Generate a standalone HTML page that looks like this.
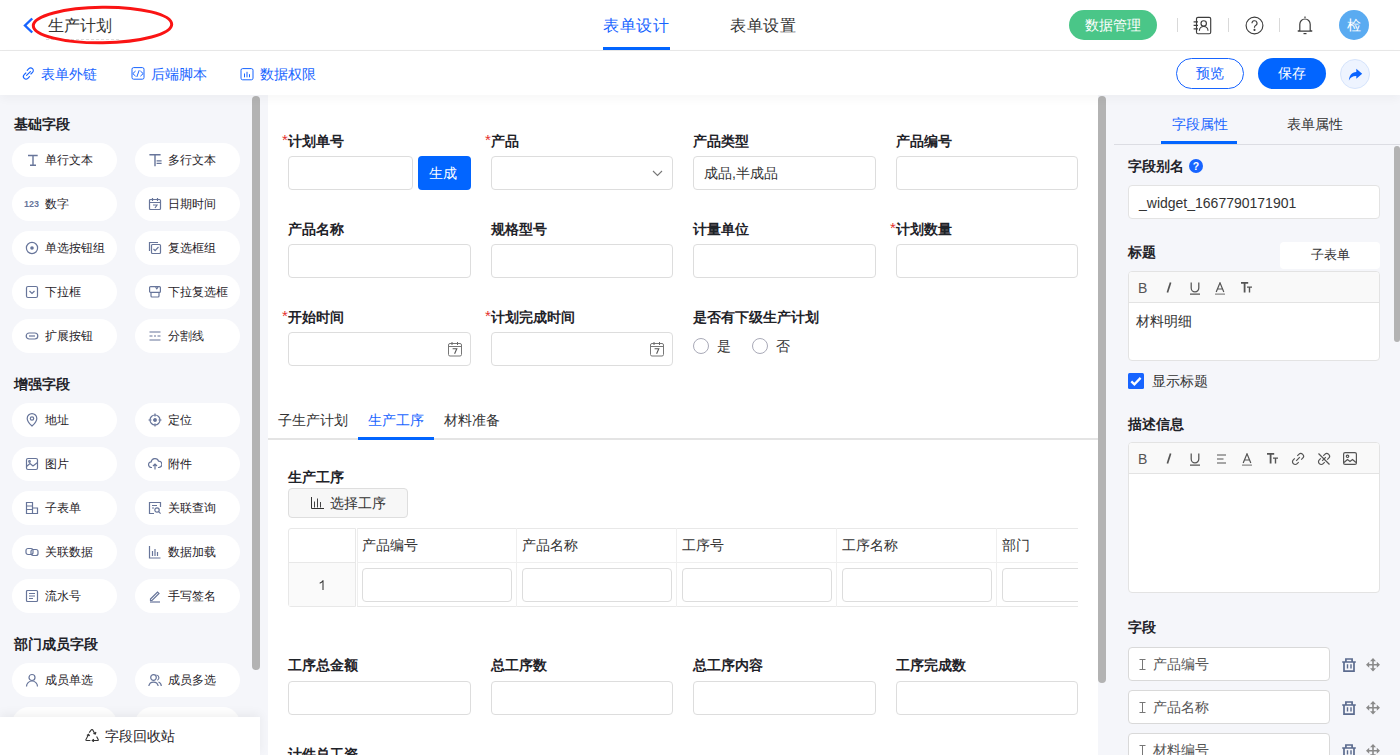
<!DOCTYPE html>
<html><head><meta charset="utf-8">
<style>
*{box-sizing:border-box;margin:0;padding:0}
html,body{width:1400px;height:755px;overflow:hidden;background:#f5f6fa;font-family:"Liberation Sans",sans-serif;color:#1f2329}
.abs{position:absolute}
#hdr{position:absolute;left:0;top:0;width:1400px;height:51px;background:#fff;border-bottom:1px solid #e8e8e8}
#tb{position:absolute;left:0;top:51px;width:1400px;height:44px;background:#fff;box-shadow:0 4px 9px rgba(0,0,0,0.035);z-index:2}
#left{position:absolute;left:0;top:95px;width:268px;height:660px;background:#f5f6fa}
#canvas{position:absolute;left:268px;top:95px;width:830px;height:660px;background:#fff;overflow:hidden}
#right{position:absolute;left:1106px;top:95px;width:294px;height:660px;background:#f5f6fa}
.sb{position:absolute;width:8px;border-radius:4px;background:#b3b3b3}
.sec{position:absolute;left:14px;font-size:14px;font-weight:bold;line-height:14px;color:#1f2329}
.pill{position:absolute;width:105px;height:34px;border-radius:17px;background:#fff;font-size:12px;line-height:34px;color:#1f2329;white-space:nowrap}
.pill svg{position:absolute;left:13px;top:10px}
.pill span{position:absolute;left:33px;top:0}
.lbl{position:absolute;font-size:14px;font-weight:bold;line-height:14px;color:#1f2329;white-space:nowrap}
.lbl i{font-style:normal;color:#e5302d;position:absolute;left:-6px;top:-1px;font-weight:normal;font-size:15px}
.inp{position:absolute;height:34px;border:1px solid #dddddd;border-radius:4px;background:#fff}
</style></head><body>
<div id="hdr">
  <svg class="abs" style="left:22px;top:17px" width="12" height="17" viewBox="0 0 12 17"><path d="M10.2 1.5 L3 8.5 L10.2 15.5" fill="none" stroke="#1764ff" stroke-width="2.4"/></svg>
  <div class="abs" style="left:48px;top:17px;font-size:16px;line-height:18px;color:#333">生产计划</div>
  <div class="abs" style="left:46px;top:39px;width:73px;border-top:1px dashed #dcdcdc"></div>
  <svg class="abs" style="left:31px;top:4px" width="145" height="42" viewBox="0 0 145 42"><ellipse cx="71.5" cy="21" rx="69.2" ry="17.8" fill="none" stroke="#fa1414" stroke-width="3" transform="rotate(-0.6 71.5 21)"/></svg>
  <div class="abs" style="left:603px;top:17px;letter-spacing:0.6px;font-size:16px;line-height:18px;color:#1764ff">表单设计</div>
  <div class="abs" style="left:603px;top:47px;width:67px;height:3px;background:#0265ff"></div>
  <div class="abs" style="left:730px;top:17px;letter-spacing:0.6px;font-size:16px;line-height:18px;color:#333">表单设置</div>
  <div class="abs" style="left:1069px;top:10px;width:88px;height:30px;border-radius:15px;background:#4ac688;color:#fff;font-size:14px;line-height:30px;text-align:center">数据管理</div>
  <div class="abs" style="left:1177px;top:18px;width:1px;height:14px;background:#d9d9d9"></div>
  <div class="abs" style="left:1228px;top:18px;width:1px;height:14px;background:#d9d9d9"></div>
  <div class="abs" style="left:1279px;top:18px;width:1px;height:14px;background:#d9d9d9"></div>

  <svg class="abs" style="left:1193px;top:16px" width="19" height="19" viewBox="0 0 19 19" fill="none" stroke="#3d3d3d" stroke-width="1.15"><rect x="3.5" y="1.3" width="14.2" height="16.4" rx="1.5"/><path d="M0.6 5.8h4.4M0.6 9.3h4.4M0.6 12.8h4.4"/><circle cx="10.7" cy="7.4" r="2.7"/><path d="M6.4 14.8a4.3 4.3 0 0 1 8.6 0"/></svg>
  <svg class="abs" style="left:1245px;top:16px" width="19" height="19" viewBox="0 0 19 19" fill="none" stroke="#3d3d3d" stroke-width="1.15"><circle cx="9.5" cy="9.5" r="8.4"/><path d="M7 7.3a2.5 2.5 0 1 1 3.6 2.2c-.8.4-1.1.9-1.1 1.7v.6"/><circle cx="9.5" cy="13.9" r="0.5" fill="#3a3a3a"/></svg>
  <svg class="abs" style="left:1297px;top:16px" width="16" height="19" viewBox="0 0 16 19" fill="none" stroke="#3d3d3d" stroke-width="1.2"><path d="M8 0.5v1.5"/><path d="M2.8 14.8V8.2a5.2 5.2 0 0 1 10.4 0v6.6H14.8v0.3H1.2v-0.3z" stroke-linejoin="round"/><path d="M6.5 17.6h3"/></svg>
  <div class="abs" style="left:1339px;top:10px;width:30px;height:30px;border-radius:15px;background:#5aabf1;color:#fff;font-size:14px;line-height:30px;text-align:center">检</div>
</div>
<div id="tb">

  <svg class="abs" style="left:22px;top:16px" width="13" height="13" viewBox="0 0 13 13" fill="none" stroke="#1764ff" stroke-width="1.15" stroke-linecap="round"><path d="M5.2 3.3l1.6-1.6a2.6 2.6 0 0 1 3.7 3.7L8.9 7"/><path d="M7.5 9.7L5.9 11.3a2.6 2.6 0 0 1-3.7-3.7L3.8 6"/><path d="M4.6 8.4l3.8-3.8"/></svg>
  <svg class="abs" style="left:131px;top:16px" width="14" height="13" viewBox="0 0 14 13" fill="none" stroke="#1764ff" stroke-width="1"><rect x="1" y="0.6" width="12" height="11.6" rx="1.6"/><path d="M4.6 4L1.8 6.6l2.8 2.6M9.4 4l2.8 2.6-2.8 2.6M8.2 3.2L5.8 10"/></svg>
  <svg class="abs" style="left:240px;top:17px" width="14" height="13" viewBox="0 0 14 13" fill="none" stroke="#1764ff" stroke-width="1"><rect x="1" y="0.6" width="12" height="11.2" rx="1.6"/><path d="M4.5 5.5v3.8M7 3.8v5.5M9.5 6.2v3.1"/></svg>
  <div class="abs" style="left:41px;top:16px;font-size:14px;line-height:14px;color:#1764ff">表单外链</div>
  <div class="abs" style="left:151px;top:16px;font-size:14px;line-height:14px;color:#1764ff">后端脚本</div>
  <div class="abs" style="left:260px;top:16px;font-size:14px;line-height:14px;color:#1764ff">数据权限</div>
  <div class="abs" style="left:1176px;top:7px;width:68px;height:31px;border-radius:16px;border:1px solid #1764ff;color:#1764ff;font-size:14px;line-height:29px;text-align:center">预览</div>
  <div class="abs" style="left:1258px;top:7px;width:68px;height:31px;border-radius:16px;background:#0265ff;color:#fff;font-size:14px;line-height:31px;text-align:center">保存</div>
  <div class="abs" style="left:1340px;top:8px;width:30px;height:30px;border-radius:15px;background:#eef4ff;border:1px solid #d6e4fc"><svg class="abs" style="left:7px;top:8px" width="15" height="13" viewBox="0 0 15 13"><path d="M8.3 0.8L14.2 5.8 8.3 10.8V7.9C4.6 7.8 2.2 9.3 0.9 12.4 1.2 7.4 3.6 4.4 8.3 3.9z" fill="#0a64ff"/></svg></div>
</div>
<div id="left">
<div class="sec" style="top:22px">基础字段</div>
<div class="sec" style="top:282px">增强字段</div>
<div class="sec" style="top:542px">部门成员字段</div>
<div class="pill" style="left:12px;top:48px"><svg width="14" height="14" viewBox="0 0 14 14" fill="none" stroke="#67759a" stroke-width="1.2"><path d="M3 2.5h9.7M8 2.5v9.8M5 12.3h6" stroke-width="1.4"/></svg><span>单行文本</span></div>
<div class="pill" style="left:135px;top:48px"><svg width="14" height="14" viewBox="0 0 14 14" fill="none" stroke="#67759a" stroke-width="1.2"><path d="M1.4 1.7h11.2M7 1.7v11.6" stroke-width="1.4"/><path d="M8.6 7.9h5M8.6 10.4h5" stroke-width="1.2"/></svg><span>多行文本</span></div>
<div class="pill" style="left:12px;top:92px"><svg width="16" height="14" viewBox="0 0 16 14" style="left:12px"><text x="0" y="10.2" font-family="Liberation Sans" font-weight="bold" font-size="9.6" textLength="15" lengthAdjust="spacingAndGlyphs" fill="#67759a">123</text></svg><span>数字</span></div>
<div class="pill" style="left:135px;top:92px"><svg width="14" height="14" viewBox="0 0 14 14" fill="none" stroke="#67759a" stroke-width="1.2"><rect x="1.5" y="2.5" width="11" height="10" rx="1"/><path d="M1.5 5.5h11M4.5 1v3M9.5 1v3M5 8h4l-2 3"/></svg><span>日期时间</span></div>
<div class="pill" style="left:12px;top:136px"><svg width="14" height="14" viewBox="0 0 14 14" fill="none" stroke="#67759a" stroke-width="1.2"><circle cx="7" cy="7" r="5.6"/><circle cx="7" cy="7" r="1.8" fill="#67759a" stroke="none"/></svg><span>单选按钮组</span></div>
<div class="pill" style="left:135px;top:136px"><svg width="14" height="14" viewBox="0 0 14 14" fill="none" stroke="#67759a" stroke-width="1.2"><path d="M1.5 10V1.5H10"/><rect x="3.5" y="3.5" width="9" height="9" rx="1"/><path d="M5.5 8l1.6 1.6L10.5 6"/></svg><span>复选框组</span></div>
<div class="pill" style="left:12px;top:180px"><svg width="14" height="14" viewBox="0 0 14 14" fill="none" stroke="#67759a" stroke-width="1.2"><rect x="1.5" y="1.5" width="11" height="11" rx="1.5"/><path d="M4.5 6l2.5 2.5L9.5 6"/></svg><span>下拉框</span></div>
<div class="pill" style="left:135px;top:180px"><svg width="14" height="14" viewBox="0 0 14 14" fill="none" stroke="#67759a" stroke-width="1.2"><rect x="1.6" y="1.6" width="10.8" height="5.8" rx="1"/><path d="M3 7.5v3.5a1 1 0 0 0 1 1h6a1 1 0 0 0 1-1V7.5"/><path d="M7.6 2.2l1.2 1.6 1.2-1.6"/></svg><span>下拉复选框</span></div>
<div class="pill" style="left:12px;top:224px"><svg width="14" height="14" viewBox="0 0 14 14" fill="none" stroke="#67759a" stroke-width="1.2"><rect x="1.2" y="4" width="11.6" height="6" rx="3"/><path d="M4 7h6"/></svg><span>扩展按钮</span></div>
<div class="pill" style="left:135px;top:224px"><svg width="14" height="14" viewBox="0 0 14 14" fill="none" stroke="#67759a" stroke-width="1.2"><path d="M1.5 3h11M1.5 7h3M6 7h2M9.5 7h3M1.5 11h11"/></svg><span>分割线</span></div>
<div class="pill" style="left:12px;top:308px"><svg width="14" height="14" viewBox="0 0 14 14" fill="none" stroke="#67759a" stroke-width="1.2"><path d="M7 13s-4.8-4.3-4.8-7.6A4.8 4.8 0 0 1 11.8 5.4C11.8 8.7 7 13 7 13z"/><circle cx="7" cy="5.5" r="1.7"/></svg><span>地址</span></div>
<div class="pill" style="left:135px;top:308px"><svg width="14" height="14" viewBox="0 0 14 14" fill="none" stroke="#67759a" stroke-width="1.2"><circle cx="7" cy="7" r="5"/><circle cx="7" cy="7" r="1.3" fill="#67759a"/><path d="M7 0.5v3M7 10.5v3M0.5 7h3M10.5 7h3"/></svg><span>定位</span></div>
<div class="pill" style="left:12px;top:352px"><svg width="14" height="14" viewBox="0 0 14 14" fill="none" stroke="#67759a" stroke-width="1.2"><rect x="1.5" y="1.5" width="11" height="11" rx="1.5"/><path d="M1.5 9.5l3.5-3 3 2.5 4.5-3.5"/><circle cx="4.5" cy="4.5" r="0.8"/></svg><span>图片</span></div>
<div class="pill" style="left:135px;top:352px"><svg width="14" height="14" viewBox="0 0 14 14" fill="none" stroke="#67759a" stroke-width="1.2"><path d="M4 10.5H3.5a2.8 2.8 0 0 1-.3-5.6A3.8 3.8 0 0 1 10.6 4.2a3 3 0 0 1 .2 6.3H10"/><path d="M7 12.5V7M5 9l2-2 2 2"/></svg><span>附件</span></div>
<div class="pill" style="left:12px;top:396px"><svg width="14" height="14" viewBox="0 0 14 14" fill="none" stroke="#67759a" stroke-width="1.2"><path d="M1.5 1.5h6v11h-6zM1.5 5h6M1.5 8.5h6M7.5 7h5v5.5h-5"/></svg><span>子表单</span></div>
<div class="pill" style="left:135px;top:396px"><svg width="14" height="14" viewBox="0 0 14 14" fill="none" stroke="#67759a" stroke-width="1.2"><path d="M12.5 6V1.5h-11v11H6"/><path d="M4 4.5h5M4 7h2"/><circle cx="9" cy="9" r="2.2"/><path d="M10.6 10.6l2 2"/></svg><span>关联查询</span></div>
<div class="pill" style="left:12px;top:440px"><svg width="14" height="14" viewBox="0 0 14 14" fill="none" stroke="#67759a" stroke-width="1.2"><rect x="1" y="3.5" width="7" height="6" rx="2"/><rect x="6" y="4.5" width="7" height="6" rx="2"/></svg><span>关联数据</span></div>
<div class="pill" style="left:135px;top:440px"><svg width="14" height="14" viewBox="0 0 14 14" fill="none" stroke="#67759a" stroke-width="1.2"><path d="M1.5 1v12h11M4.5 6v5M7 4v7M9.5 7v4"/></svg><span>数据加载</span></div>
<div class="pill" style="left:12px;top:484px"><svg width="14" height="14" viewBox="0 0 14 14" fill="none" stroke="#67759a" stroke-width="1.2"><rect x="1.5" y="1.5" width="11" height="11" rx="1"/><path d="M4 4.5h6M4 7h6M4 9.5h4"/></svg><span>流水号</span></div>
<div class="pill" style="left:135px;top:484px"><svg width="14" height="14" viewBox="0 0 14 14" fill="none" stroke="#67759a" stroke-width="1.2"><path d="M2.5 10l7-7 1.5 1.5-7 7H2.5z"/><path d="M2 13h10"/></svg><span>手写签名</span></div>
<div class="pill" style="left:12px;top:568px"><svg width="14" height="14" viewBox="0 0 14 14" fill="none" stroke="#67759a" stroke-width="1.2"><circle cx="7" cy="4.5" r="3"/><path d="M1.5 13.5a5.5 5.5 0 0 1 11 0"/></svg><span>成员单选</span></div>
<div class="pill" style="left:135px;top:568px"><svg width="14" height="14" viewBox="0 0 14 14" fill="none" stroke="#67759a" stroke-width="1.2"><circle cx="5.5" cy="4.5" r="2.8"/><path d="M0.8 13a4.8 4.8 0 0 1 9.4 0M8.5 2a2.8 2.8 0 0 1 .8 5.3M10.5 9a4.5 4.5 0 0 1 2.8 4"/></svg><span>成员多选</span></div>
<div class="pill" style="left:12px;top:612px"><span></span></div>
<div class="pill" style="left:135px;top:612px"><span></span></div>
<div class="abs" style="left:0;top:622px;width:260px;height:38px;background:#fff;box-shadow:0 -3px 10px rgba(0,0,0,0.06)"><svg class="abs" style="left:85px;top:12px" width="15" height="13" viewBox="0 0 15 13" fill="none" stroke="#333" stroke-width="1.1"><path d="M4.2 3.6L6.3 0.9Q7 0.1 7.7 0.9L9.6 4.2"/><path d="M8.4 4.4L10.3 4.9 10.9 3" stroke-width="1.2"/><path d="M3.6 5.6L0.9 10.6Q0.6 11.5 1.6 11.5H5.4"/><path d="M1.9 6.4L3.6 5.4 4.6 7" stroke-width="1.2"/><path d="M7.4 11.5H12.6Q13.6 11.5 13.2 10.5L11.6 7.4"/><path d="M8.8 10.1L7.3 11.5 8.8 12.8" stroke-width="1.2"/></svg><div class="abs" style="left:105px;top:12px;font-size:14px;line-height:14px;color:#1f2329">字段回收站</div></div>
  <div class="sb" style="left:252px;top:1px;height:574px"></div>
</div>
<div id="canvas">
<div class="lbl" style="left:20px;top:39px"><i>*</i>计划单号</div>
<div class="inp" style="left:20px;top:61px;width:125px"></div>
<div class="abs" style="left:150px;top:61px;width:53px;height:34px;border-radius:4px;background:#0265ff;color:#fff;font-size:14px;line-height:34px;text-align:center;padding-right:3px">生成</div>
<div class="lbl" style="left:223px;top:39px"><i>*</i>产品</div>
<div class="inp" style="left:223px;top:61px;width:182px"><svg class="abs" style="right:9px;top:13px" width="11" height="7" viewBox="0 0 11 7"><path d="M1 1l4.5 4.5L10 1" fill="none" stroke="#777" stroke-width="1.1"/></svg></div>
<div class="lbl" style="left:425px;top:39px">产品类型</div>
<div class="inp" style="left:425px;top:61px;width:183px"><div class="abs" style="left:10px;top:0;font-size:14px;line-height:32px;color:#333">成品,半成品</div></div>
<div class="lbl" style="left:628px;top:39px">产品编号</div>
<div class="inp" style="left:628px;top:61px;width:182px"></div>
<div class="lbl" style="left:20px;top:127px">产品名称</div>
<div class="inp" style="left:20px;top:149px;width:183px"></div>
<div class="lbl" style="left:223px;top:127px">规格型号</div>
<div class="inp" style="left:223px;top:149px;width:182px"></div>
<div class="lbl" style="left:425px;top:127px">计量单位</div>
<div class="inp" style="left:425px;top:149px;width:183px"></div>
<div class="lbl" style="left:628px;top:127px"><i>*</i>计划数量</div>
<div class="inp" style="left:628px;top:149px;width:182px"></div>
<div class="lbl" style="left:20px;top:215px"><i>*</i>开始时间</div>
<div class="inp" style="left:20px;top:237px;width:183px"><svg class="abs" style="right:7px;top:9px" width="15" height="15" viewBox="0 0 15 15" fill="none" stroke="#555" stroke-width="1"><rect x="0.5" y="1.5" width="13" height="12.5" rx="1.5" stroke="#777"/><path d="M0.5 4.5h13" stroke="#777"/><path d="M4 0v3M9.5 0v3" stroke="#666"/><path d="M4.6 6.8h4.2L6.6 11.8" stroke-width="1.1"/></svg></div>
<div class="lbl" style="left:223px;top:215px"><i>*</i>计划完成时间</div>
<div class="inp" style="left:223px;top:237px;width:182px"><svg class="abs" style="right:7px;top:9px" width="15" height="15" viewBox="0 0 15 15" fill="none" stroke="#555" stroke-width="1"><rect x="0.5" y="1.5" width="13" height="12.5" rx="1.5" stroke="#777"/><path d="M0.5 4.5h13" stroke="#777"/><path d="M4 0v3M9.5 0v3" stroke="#666"/><path d="M4.6 6.8h4.2L6.6 11.8" stroke-width="1.1"/></svg></div>
<div class="lbl" style="left:425px;top:215px">是否有下级生产计划</div>
<div class="abs" style="left:425px;top:243px;width:16px;height:16px;border:1px solid #a9aab8;border-radius:50%"></div><div class="abs" style="left:449px;top:243px;font-size:14px;line-height:16px;color:#333">是</div>
<div class="abs" style="left:484px;top:243px;width:16px;height:16px;border:1px solid #a9aab8;border-radius:50%"></div><div class="abs" style="left:508px;top:243px;font-size:14px;line-height:16px;color:#333">否</div>
<div class="abs" style="left:0;top:343px;width:830px;height:2px;background:#e4e4e4"></div>
<div class="abs" style="left:10px;top:318px;font-size:14px;line-height:14px;color:#333">子生产计划</div>
<div class="abs" style="left:100px;top:318px;font-size:14px;line-height:14px;color:#1764ff">生产工序</div>
<div class="abs" style="left:176px;top:318px;font-size:14px;line-height:14px;color:#333">材料准备</div>
<div class="abs" style="left:90px;top:342px;width:76px;height:3px;background:#0265ff"></div>
<div class="lbl" style="left:20px;top:375px">生产工序</div>
<div class="abs" style="left:20px;top:393px;width:120px;height:30px;border:1px solid #dedede;border-radius:4px;background:#f7f7f7"><svg class="abs" style="left:22px;top:8px" width="14" height="13" viewBox="0 0 14 13" fill="none" stroke="#333" stroke-width="1"><path d="M0.5 0v11.5H13"/><path d="M3.5 4.5v6M6.5 1.5v9M9.5 5v5.5" stroke="#444"/></svg><div class="abs" style="left:41px;top:7px;font-size:14px;line-height:14px;color:#333">选择工序</div></div>
<div class="abs" style="left:20px;top:433px;width:790px;height:79px;overflow:hidden"><div class="abs" style="left:0;top:0;width:68px;height:79px;border:1px solid #e8e8e8;border-radius:3px 0 0 3px;background:#fff"></div><div class="abs" style="left:1px;top:35px;width:66px;height:43px;background:#fafafa"></div><div class="abs" style="left:0;top:34px;width:68px;height:1px;background:#e8e8e8"></div><svg class="abs" style="left:31px;top:52px" width="6" height="11" viewBox="0 0 6 11"><path d="M4 0.3V10M4 0.6C3.3 1.9 2 2.8 0.7 3.3" fill="none" stroke="#333" stroke-width="1.05"/></svg><div class="abs" style="left:69px;top:0;width:741px;height:79px;border-top:1px solid #e8e8e8;border-bottom:1px solid #e8e8e8;border-left:1px solid #efefef"></div><div class="abs" style="left:69px;top:34px;width:741px;height:1px;background:#efefef"></div><div class="abs" style="left:74px;top:10px;font-size:14px;line-height:14px;color:#333">产品编号</div><div class="inp" style="left:74px;top:40px;width:150px;height:34px"></div><div class="abs" style="left:228px;top:0;width:1px;height:79px;background:#efefef"></div><div class="abs" style="left:234px;top:10px;font-size:14px;line-height:14px;color:#333">产品名称</div><div class="inp" style="left:234px;top:40px;width:150px;height:34px"></div><div class="abs" style="left:388px;top:0;width:1px;height:79px;background:#efefef"></div><div class="abs" style="left:394px;top:10px;font-size:14px;line-height:14px;color:#333">工序号</div><div class="inp" style="left:394px;top:40px;width:150px;height:34px"></div><div class="abs" style="left:548px;top:0;width:1px;height:79px;background:#efefef"></div><div class="abs" style="left:554px;top:10px;font-size:14px;line-height:14px;color:#333">工序名称</div><div class="inp" style="left:554px;top:40px;width:150px;height:34px"></div><div class="abs" style="left:708px;top:0;width:1px;height:79px;background:#efefef"></div><div class="abs" style="left:714px;top:10px;font-size:14px;line-height:14px;color:#333">部门</div><div class="inp" style="left:714px;top:40px;width:150px;height:34px"></div></div>
<div class="lbl" style="left:20px;top:563px">工序总金额</div>
<div class="inp" style="left:20px;top:586px;width:183px"></div>
<div class="lbl" style="left:223px;top:563px">总工序数</div>
<div class="inp" style="left:223px;top:586px;width:182px"></div>
<div class="lbl" style="left:425px;top:563px">总工序内容</div>
<div class="inp" style="left:425px;top:586px;width:183px"></div>
<div class="lbl" style="left:628px;top:563px">工序完成数</div>
<div class="inp" style="left:628px;top:586px;width:182px"></div>
<div class="lbl" style="left:20px;top:652px">计件总工资</div>
</div>
<div class="sb" style="left:1098px;top:96px;height:587px"></div>
<div id="right">
<div class="abs" style="left:8px;top:49px;width:286px;height:1px;background:#dcdde3"></div>
<div class="abs" style="left:66px;top:22px;font-size:14px;line-height:14px;color:#1764ff">字段属性</div>
<div class="abs" style="left:181px;top:22px;font-size:14px;line-height:14px;color:#333">表单属性</div>
<div class="abs" style="left:55px;top:46px;width:76px;height:3px;background:#0265ff"></div>
<div class="sb" style="left:288px;top:51px;width:6px;height:196px;border-radius:3px"></div>
<div class="lbl" style="left:22px;top:64px">字段别名</div>
<svg class="abs" style="left:83px;top:64px" width="14" height="14" viewBox="0 0 14 14"><circle cx="7" cy="7" r="7" fill="#1764ff"/><text x="7" y="11" text-anchor="middle" font-family="Liberation Sans" font-weight="bold" font-size="10.5" fill="#fff">?</text></svg>
<div class="inp" style="left:22px;top:90px;width:252px;height:34px;border-color:#e3e3e3"><div class="abs" style="left:10px;top:1px;font-size:14px;line-height:32px;color:#333">_widget_1667790171901</div></div>
<div class="lbl" style="left:22px;top:150px">标题</div>
<div class="abs" style="left:174px;top:147px;width:100px;height:27px;border-radius:4px;background:#fff;font-size:12.5px;line-height:27px;text-align:center;color:#333">子表单</div>
<div class="abs" style="left:22px;top:176px;width:252px;height:90px;background:#fff;border:1px solid #e3e3e3;border-radius:4px;overflow:hidden"><div class="abs" style="left:0;top:0;width:100%;height:31px;background:#f9f9f9;border-bottom:1px solid #e3e3e3"></div><div class="abs" style="left:9px;top:8px;font-size:14px;line-height:16px;color:#555">B</div><svg class="abs" style="left:37px;top:10px" width="6" height="11" viewBox="0 0 6 11"><path d="M4.6 0.5L1.4 10.5" stroke="#555" stroke-width="1.7"/></svg><svg class="abs" style="left:61px;top:10px" width="10" height="13" viewBox="0 0 10 13" fill="none" stroke="#555" stroke-width="1.25"><path d="M1.2 0.5v5.5a3.8 3.8 0 0 0 7.6 0V0.5M0 12h10"/></svg><svg class="abs" style="left:86px;top:10px" width="10" height="13" viewBox="0 0 10 13" fill="none" stroke="#555" stroke-width="1.2"><path d="M1.2 10L5 0.8 8.8 10M2.5 7h5"/><path d="M0 12.2h10" stroke="#888" stroke-width="1.3"/></svg><svg class="abs" style="left:112px;top:10px" width="11" height="11" viewBox="0 0 11 11" fill="#555"><path d="M0 0h7.2v1.7H4.5V10.5H2.7V1.7H0z M6 4.5h5v1.3H9.2v4.7H7.8V5.8H6z"/></svg><div class="abs" style="left:7px;top:42px;font-size:14px;line-height:14px;color:#333">材料明细</div></div>
<svg class="abs" style="left:22px;top:278px" width="16" height="16" viewBox="0 0 16 16"><rect width="16" height="16" rx="1.5" fill="#1764ff"/><path d="M3.3 8.3l3.1 3 6.2-6.4" fill="none" stroke="#fff" stroke-width="2.3"/></svg>
<div class="abs" style="left:46px;top:279px;font-size:14px;line-height:14px;color:#333">显示标题</div>
<div class="lbl" style="left:22px;top:322px">描述信息</div>
<div class="abs" style="left:22px;top:347px;width:252px;height:151px;background:#fff;border:1px solid #e3e3e3;border-radius:4px;overflow:hidden"><div class="abs" style="left:0;top:0;width:100%;height:31px;background:#f9f9f9;border-bottom:1px solid #e3e3e3"></div><div class="abs" style="left:9px;top:8px;font-size:14px;line-height:16px;color:#555">B</div><svg class="abs" style="left:37px;top:10px" width="6" height="11" viewBox="0 0 6 11"><path d="M4.6 0.5L1.4 10.5" stroke="#555" stroke-width="1.7"/></svg><svg class="abs" style="left:61px;top:10px" width="10" height="13" viewBox="0 0 10 13" fill="none" stroke="#555" stroke-width="1.25"><path d="M1.2 0.5v5.5a3.8 3.8 0 0 0 7.6 0V0.5M0 12h10"/></svg><svg class="abs" style="left:88px;top:11px" width="9" height="10" viewBox="0 0 9 10" fill="none" stroke="#555" stroke-width="1.1"><path d="M0 1h9M0 5h6.5M0 9h9"/></svg><svg class="abs" style="left:113px;top:10px" width="10" height="13" viewBox="0 0 10 13" fill="none" stroke="#555" stroke-width="1.2"><path d="M1.2 10L5 0.8 8.8 10M2.5 7h5"/><path d="M0 12.2h10" stroke="#888" stroke-width="1.3"/></svg><svg class="abs" style="left:138px;top:10px" width="11" height="11" viewBox="0 0 11 11" fill="#555"><path d="M0 0h7.2v1.7H4.5V10.5H2.7V1.7H0z M6 4.5h5v1.3H9.2v4.7H7.8V5.8H6z"/></svg><svg class="abs" style="left:162px;top:9px" width="14" height="14" viewBox="0 0 14 14" fill="none" stroke="#555" stroke-width="1.2"><path d="M6.3 3.8l1.5-1.5a2.7 2.7 0 0 1 3.9 3.9L10.2 7.7M7.7 10.2l-1.5 1.5A2.7 2.7 0 0 1 2.3 7.8L3.8 6.3M5.2 8.8l3.6-3.6"/></svg><svg class="abs" style="left:188px;top:9px" width="14" height="14" viewBox="0 0 14 14" fill="none" stroke="#555" stroke-width="1.2"><path d="M6.3 3.8l1.5-1.5a2.7 2.7 0 0 1 3.9 3.9L10.2 7.7M7.7 10.2l-1.5 1.5A2.7 2.7 0 0 1 2.3 7.8L3.8 6.3M5.2 8.8l3.6-3.6M1.5 1.5l11 11"/></svg><svg class="abs" style="left:214px;top:9px" width="14" height="13" viewBox="0 0 14 13" fill="none" stroke="#555" stroke-width="1.2"><rect x="0.6" y="0.6" width="12.8" height="11.8" rx="1.5"/><circle cx="4.5" cy="4.3" r="1.2"/><path d="M1 10.5l3.5-3 2.5 2 2.5-2 3.5 3"/></svg></div>
<div class="lbl" style="left:22px;top:525px">字段</div>
<div class="abs" style="left:0;top:552px;width:294px;height:34px"><div class="abs" style="left:22px;top:0;width:202px;height:34px;background:#fff;border:1px solid #d9d9d9;border-radius:4px"><svg class="abs" style="left:10px;top:11px" width="7" height="11" viewBox="0 0 7 11" fill="none" stroke="#777" stroke-width="1"><path d="M0.5 0.5h6M3.5 0.5v10M0.5 10.5h6"/></svg><div class="abs" style="left:24px;top:9px;font-size:14px;line-height:14px;color:#555">产品编号</div></div><svg class="abs" style="left:236px;top:11px" width="14" height="14" viewBox="0 0 14 14" fill="none" stroke="#5b6b8e" stroke-width="1.7"><path d="M3.9 3.5V1h6.2v2.5M0.2 4h13.6M2 4.5v8.6h10V4.5"/><path d="M5.5 6.2v4.3M9 6.2v4.3" stroke-width="1.4"/></svg><svg class="abs" style="left:260px;top:11px" width="14" height="14" viewBox="0 0 14 14"><path d="M7 2.5v9M2.5 6.8h9" stroke="#8a8a8a" stroke-width="1.6"/><path d="M7 0L4 3.2h6zM7 13.5L4 10.3h6zM0 6.8L3.2 3.8v6zM14 6.8L10.8 3.8v6z" fill="#8a8a8a"/></svg></div>
<div class="abs" style="left:0;top:595px;width:294px;height:34px"><div class="abs" style="left:22px;top:0;width:202px;height:34px;background:#fff;border:1px solid #d9d9d9;border-radius:4px"><svg class="abs" style="left:10px;top:11px" width="7" height="11" viewBox="0 0 7 11" fill="none" stroke="#777" stroke-width="1"><path d="M0.5 0.5h6M3.5 0.5v10M0.5 10.5h6"/></svg><div class="abs" style="left:24px;top:9px;font-size:14px;line-height:14px;color:#555">产品名称</div></div><svg class="abs" style="left:236px;top:11px" width="14" height="14" viewBox="0 0 14 14" fill="none" stroke="#5b6b8e" stroke-width="1.7"><path d="M3.9 3.5V1h6.2v2.5M0.2 4h13.6M2 4.5v8.6h10V4.5"/><path d="M5.5 6.2v4.3M9 6.2v4.3" stroke-width="1.4"/></svg><svg class="abs" style="left:260px;top:11px" width="14" height="14" viewBox="0 0 14 14"><path d="M7 2.5v9M2.5 6.8h9" stroke="#8a8a8a" stroke-width="1.6"/><path d="M7 0L4 3.2h6zM7 13.5L4 10.3h6zM0 6.8L3.2 3.8v6zM14 6.8L10.8 3.8v6z" fill="#8a8a8a"/></svg></div>
<div class="abs" style="left:0;top:638px;width:294px;height:34px"><div class="abs" style="left:22px;top:0;width:202px;height:34px;background:#fff;border:1px solid #d9d9d9;border-radius:4px"><svg class="abs" style="left:10px;top:11px" width="7" height="11" viewBox="0 0 7 11" fill="none" stroke="#777" stroke-width="1"><path d="M0.5 0.5h6M3.5 0.5v10M0.5 10.5h6"/></svg><div class="abs" style="left:24px;top:9px;font-size:14px;line-height:14px;color:#555">材料编号</div></div><svg class="abs" style="left:236px;top:11px" width="14" height="14" viewBox="0 0 14 14" fill="none" stroke="#5b6b8e" stroke-width="1.7"><path d="M3.9 3.5V1h6.2v2.5M0.2 4h13.6M2 4.5v8.6h10V4.5"/><path d="M5.5 6.2v4.3M9 6.2v4.3" stroke-width="1.4"/></svg><svg class="abs" style="left:260px;top:11px" width="14" height="14" viewBox="0 0 14 14"><path d="M7 2.5v9M2.5 6.8h9" stroke="#8a8a8a" stroke-width="1.6"/><path d="M7 0L4 3.2h6zM7 13.5L4 10.3h6zM0 6.8L3.2 3.8v6zM14 6.8L10.8 3.8v6z" fill="#8a8a8a"/></svg></div>
</div>
</body></html>
